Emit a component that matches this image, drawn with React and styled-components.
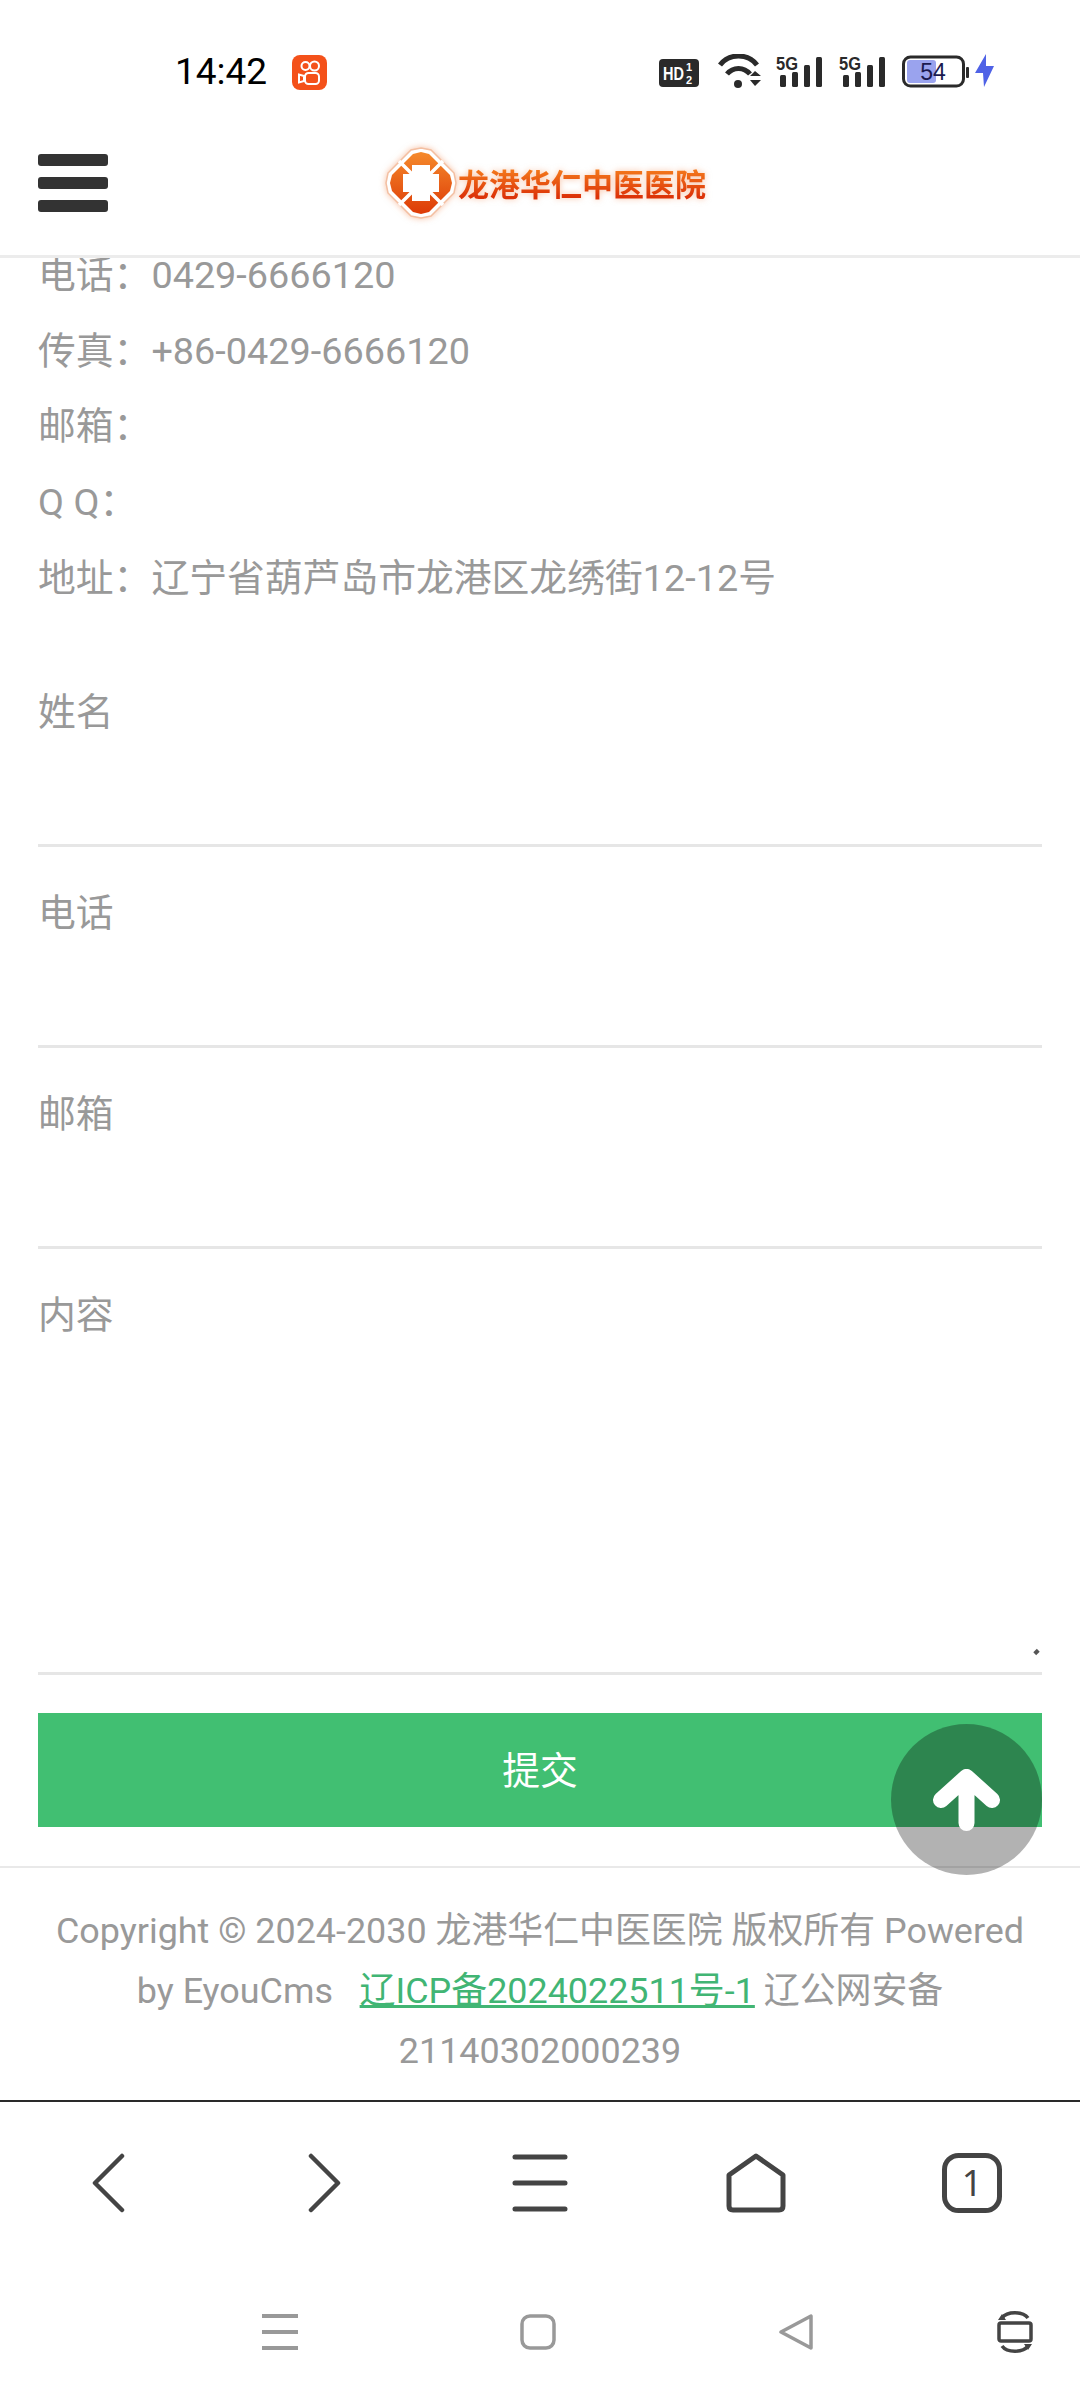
import React from "react";
import styled, {createGlobalStyle} from "styled-components";

const GlobalStyle = createGlobalStyle`
    html, body {
        margin: 0;
        padding: 0;
        background: #fff;
        font-family: Roboto, "Noto Sans CJK SC", sans-serif;
    }
    * { box-sizing: border-box; }
`

const Page = styled.div`
    width: 1080px;
    height: 2400px;
    display: flex;
    flex-direction: column;
    overflow: hidden;
    background: #fff;
`

const StatusBar = styled.div`
    height: 110px;
    flex: none;
    padding: 54px 85px 0 175px;
    display: flex;
    justify-content: space-between;
    align-items: flex-start;
`

const StatusLeft = styled.div`
    display: flex;
    align-items: center;
    gap: 25px;
`

const Clock = styled.span`
    font-size: 37px;
    line-height: 36px;
    color: #000;
`

const StatusIcons = styled.div`
    display: flex;
    align-items: flex-start;
    height: 36px;
`

const StatusIcon = styled.svg`
    display: block;
    flex: none;
    margin-left: ${props => props.$left || 0}px;
    text { font-family: "Liberation Sans", Roboto, sans-serif; }
`

const Header = styled.header`
    height: 148px;
    flex: none;
    padding-left: 38px;
    display: flex;
    align-items: center;
    gap: 277px;
    border-bottom: 3px solid #ececec;
`

const Burger = styled.div`
    width: 70px;
    display: flex;
    flex-direction: column;
    gap: 11px;
`

const BurgerBar = styled.span`
    display: block;
    height: 12px;
    background: #333;
    border-radius: 3px;
`

const Logo = styled.div`
    display: flex;
    align-items: center;
    gap: 1px;
    filter: drop-shadow(0 0 3px rgba(240, 130, 70, .5));
`

const LogoText = styled.span`
    font-family: "Noto Sans CJK SC", sans-serif;
    font-weight: 700;
    font-size: 31px;
    line-height: 40px;
    background: linear-gradient(180deg, #f47a1c 15%, #dc3208 85%);
    -webkit-background-clip: text;
    background-clip: text;
    color: transparent;
`

const Content = styled.main`
    flex: 1;
    min-height: 0;
    overflow: hidden;
    padding: 0 38px;
`

const Info = styled.div`
    margin-top: -20px;
    margin-bottom: 30px;
`

const InfoRow = styled.div`
    height: 75.7px;
    line-height: 75.7px;
    font-size: 37.8px;
    color: #999;
    white-space: nowrap;
`

const Field = styled.div`
    position: relative;
    height: ${props => props.$tall ? 426 : 201}px;
    padding-top: 41px;
    display: flex;
    flex-direction: column;
    border-bottom: 3px solid #e6e6e6;
`

const Label = styled.label`
    font-size: 37.8px;
    line-height: 50px;
    color: #999;
`

const Input = styled.input`
    flex: 1;
    min-height: 0;
    border: none;
    outline: none;
    background: transparent;
`

const TextArea = styled.textarea`
    flex: 1;
    min-height: 0;
    border: none;
    outline: none;
    resize: none;
    background: transparent;
`

const ResizeMark = styled.span`
    position: absolute;
    right: 3px;
    bottom: 18px;
    width: 5px;
    height: 4px;
    background: #555;
    transform: rotate(-45deg);
`

const SubmitButton = styled.button`
    display: block;
    width: 100%;
    height: 114px;
    margin-top: 38px;
    border: none;
    background: #41bf72;
    color: #fff;
    font-family: inherit;
    font-size: 37.8px;
    padding: 0 0 6px;
`

const Footer = styled.footer`
    flex: none;
    height: 236px;
    padding: 33px 38px 0;
    border-top: 2px solid #e9e9e9;
    border-bottom: 2px solid #2a2a2a;
    text-align: center;
    font-size: 35.9px;
    line-height: 60px;
    color: #999;
`

const FooterLink = styled.a`
    color: #41b574;
    text-decoration: underline;
`

const ToolBar = styled.nav`
    height: 162px;
    flex: none;
    display: grid;
    grid-template-columns: repeat(5, 1fr);
    align-items: center;
    justify-items: center;
`

const ToolIcon = styled.svg`
    display: block;
    fill: none;
    stroke: #444;
    stroke-linecap: round;
    stroke-linejoin: round;
    text { font-family: "Noto Sans", sans-serif; fill: #444; stroke: none; }
`

const NavBar = styled.div`
    height: 136px;
    flex: none;
    display: grid;
    grid-template-columns: 258px 259px 218px auto;
    padding-left: 262px;
    align-items: center;
`

const NavIcon = styled.svg`
    display: block;
    fill: none;
    stroke: ${props => props.$dark ? "#444" : "#999"};
`

const BackToTop = styled.div`
    position: fixed;
    right: 38px;
    bottom: 525px;
    width: 151px;
    height: 151px;
    border-radius: 50%;
    background: rgba(0, 0, 0, .3);
    display: flex;
    align-items: center;
    justify-content: center;
`

const LogoMark = () => (
    <svg width="72" height="72" viewBox="0 0 72 72">
        <defs>
            <linearGradient id="logoFill" x1="0" y1="0" x2="0" y2="1">
                <stop offset="0" stopColor="#f58a2c" />
                <stop offset="1" stopColor="#dd3a06" />
            </linearGradient>
        </defs>
        <path d="M36 1 L46 3 L69 26 L71 36 L69 46 L46 69 L36 71 L26 69 L3 46 L1 36 L3 26 L26 3 Z" fill="#fff" stroke="#f3bfa2" strokeWidth="1.5" />
        <path d="M36 5 L44 7 L65 28 L67 36 L65 44 L44 65 L36 67 L28 65 L7 44 L5 36 L7 28 L28 7 Z" fill="url(#logoFill)" />
        <path d="M27 18 H45 V27 H54 V45 H45 V54 H27 V45 H18 V27 H27 Z" fill="#fff" />
        <path d="M27 27 L14 14 M45 27 L58 14 M27 45 L14 58 M45 45 L58 58" stroke="#fff" strokeWidth="3.5" />
    </svg>
)

const AppBadge = () => (
    <svg width="35" height="35" viewBox="0 0 35 35">
        <rect width="35" height="35" rx="8" fill="#f4511a" />
        <g fill="none" stroke="#fff" strokeWidth="2">
            <circle cx="13.5" cy="11" r="4" />
            <circle cx="22.5" cy="11" r="4.5" />
            <rect x="13" y="18" width="14" height="11" rx="3.5" />
            <path d="M12 21 L7 19.5 V27.5 L12 26 Z" />
        </g>
    </svg>
)

const HdBadge = () => (
    <StatusIcon width="40" height="30" viewBox="0 0 40 30" style={{marginTop: 5}}>
        <rect width="40" height="28" rx="4" fill="#2a2a2a" />
        <text x="4" y="21" fontSize="19" fontWeight="700" fill="#fff" textLength="21" lengthAdjust="spacingAndGlyphs">HD</text>
        <text x="27" y="12" fontSize="11" fontWeight="700" fill="#fff">1</text>
        <text x="27" y="25" fontSize="11" fontWeight="700" fill="#fff">2</text>
    </StatusIcon>
)

const WifiIcon = () => (
    <StatusIcon $left={19} width="44" height="34" viewBox="0 0 44 34">
        <g fill="none" stroke="#2a2a2a" strokeWidth="5">
            <path d="M2 11 C11 -1 30 -1 39 11" />
            <path d="M9 20 C15 12.5 26 12.5 32 20" />
        </g>
        <circle cx="20" cy="30" r="4" fill="#2a2a2a" />
        <path d="M32 22 L37 17 L43 22 Z M32 26 H43 L37 32 Z" fill="#2a2a2a" />
    </StatusIcon>
)

const SignalIcon = ({left}) => (
    <StatusIcon $left={left} width="46" height="34" viewBox="0 0 46 34">
        <text x="0" y="16" fontSize="19" fontWeight="700" fill="#2a2a2a" textLength="22" lengthAdjust="spacingAndGlyphs">5G</text>
        <rect x="4" y="21" width="6" height="12" rx="1.5" fill="#2a2a2a" />
        <rect x="16" y="18" width="6" height="15" rx="1.5" fill="#2a2a2a" />
        <rect x="28" y="11" width="6" height="22" rx="1.5" fill="#2a2a2a" />
        <rect x="40" y="3" width="6" height="30" rx="1.5" fill="#2a2a2a" />
    </StatusIcon>
)

const BatteryIcon = () => (
    <StatusIcon $left={17} width="68" height="34" viewBox="0 0 68 34">
        <rect x="5" y="6" width="29" height="23" rx="3" fill="#9aa3ee" />
        <rect x="1.5" y="3" width="60" height="29" rx="7" fill="none" stroke="#2a2a2a" strokeWidth="3" />
        <text x="31" y="26" textAnchor="middle" fontSize="23" fill="#1a1a50">54</text>
        <rect x="64" y="13" width="3" height="11" rx="1" fill="#2a2a2a" />
    </StatusIcon>
)

const BoltIcon = () => (
    <StatusIcon $left={5} width="20" height="33" viewBox="0 0 20 33">
        <path d="M11 0 L0 19 H8 L9 33 L19 12 H11 Z" fill="#4f62e6" />
    </StatusIcon>
)

const ArrowUp = () => (
    <svg width="67" height="63" viewBox="0 0 67 63" fill="none" stroke="#fff" strokeWidth="16" strokeLinecap="round" strokeLinejoin="round">
        <path d="M33.5 55 V9 M8 32 L33.5 9 L59 32" />
    </svg>
)

const INFO = [
    "电话：0429-6666120",
    "传真：+86-0429-6666120",
    "邮箱：",
    "Q Q：",
    "地址：辽宁省葫芦岛市龙港区龙绣街12-12号",
]

export default function App() {
    return (
        <Page>
            <GlobalStyle />
            <StatusBar>
                <StatusLeft>
                    <Clock>14:42</Clock>
                    <AppBadge />
                </StatusLeft>
                <StatusIcons>
                    <HdBadge />
                    <WifiIcon />
                    <SignalIcon left={14} />
                    <SignalIcon left={17} />
                    <BatteryIcon />
                    <BoltIcon />
                </StatusIcons>
            </StatusBar>
            <Header>
                <Burger>
                    <BurgerBar />
                    <BurgerBar />
                    <BurgerBar />
                </Burger>
                <Logo>
                    <LogoMark />
                    <LogoText>龙港华仁中医医院</LogoText>
                </Logo>
            </Header>
            <Content>
                <Info>
                    {INFO.map(row => <InfoRow key={row}>{row}</InfoRow>)}
                </Info>
                <form>
                    <Field>
                        <Label>姓名</Label>
                        <Input />
                    </Field>
                    <Field>
                        <Label>电话</Label>
                        <Input />
                    </Field>
                    <Field>
                        <Label>邮箱</Label>
                        <Input />
                    </Field>
                    <Field $tall>
                        <Label>内容</Label>
                        <TextArea />
                        <ResizeMark />
                    </Field>
                    <SubmitButton type="button">提交</SubmitButton>
                </form>
            </Content>
            <Footer>
                Copyright © 2024-2030 龙港华仁中医医院 版权所有 Powered by EyouCms&nbsp;&nbsp; <FooterLink>辽ICP备2024022511号-1</FooterLink> 辽公网安备 21140302000239
            </Footer>
            <ToolBar>
                <ToolIcon width="33" height="60" viewBox="0 0 33 60" strokeWidth="4.5">
                    <path d="M30 3 L3 30 L30 57" />
                </ToolIcon>
                <ToolIcon width="33" height="60" viewBox="0 0 33 60" strokeWidth="4.5">
                    <path d="M3 3 L30 30 L3 57" />
                </ToolIcon>
                <ToolIcon width="56" height="60" viewBox="0 0 56 60" strokeWidth="5">
                    <path d="M3 4 H53 M3 30 H53 M3 56 H53" />
                </ToolIcon>
                <ToolIcon width="62" height="60" viewBox="0 0 62 60" strokeWidth="5">
                    <path d="M31 3 L58 22 V53 Q58 57 54 57 H8 Q4 57 4 53 V22 Z" />
                </ToolIcon>
                <ToolIcon width="60" height="60" viewBox="0 0 60 60" strokeWidth="5">
                    <rect x="2.5" y="2.5" width="55" height="55" rx="14" />
                    <text x="30" y="43" textAnchor="middle" fontSize="36">1</text>
                </ToolIcon>
            </ToolBar>
            <NavBar>
                <NavIcon width="36" height="36" viewBox="0 0 36 36" strokeWidth="4">
                    <path d="M0 2 H36 M0 18 H36 M0 34 H36" />
                </NavIcon>
                <NavIcon width="36" height="36" viewBox="0 0 36 36" strokeWidth="3.5">
                    <rect x="2" y="2" width="32" height="32" rx="8" />
                </NavIcon>
                <NavIcon width="34" height="36" viewBox="0 0 34 36" strokeWidth="3.5">
                    <path d="M32 2 V34 L2 18 Z" strokeLinejoin="round" />
                </NavIcon>
                <NavIcon $dark width="36" height="46" viewBox="0 0 36 46" strokeWidth="3.5">
                    <rect x="2" y="14" width="32" height="18" rx="2" />
                    <path d="M5 9 C10 2 26 2 31 9 M31 37 C26 44 10 44 5 37" />
                    <path d="M1 11 H9 L5 5 Z M35 35 H27 L31 41 Z" fill="#444" stroke="none" />
                </NavIcon>
            </NavBar>
            <BackToTop>
                <ArrowUp />
            </BackToTop>
        </Page>
    )
}
